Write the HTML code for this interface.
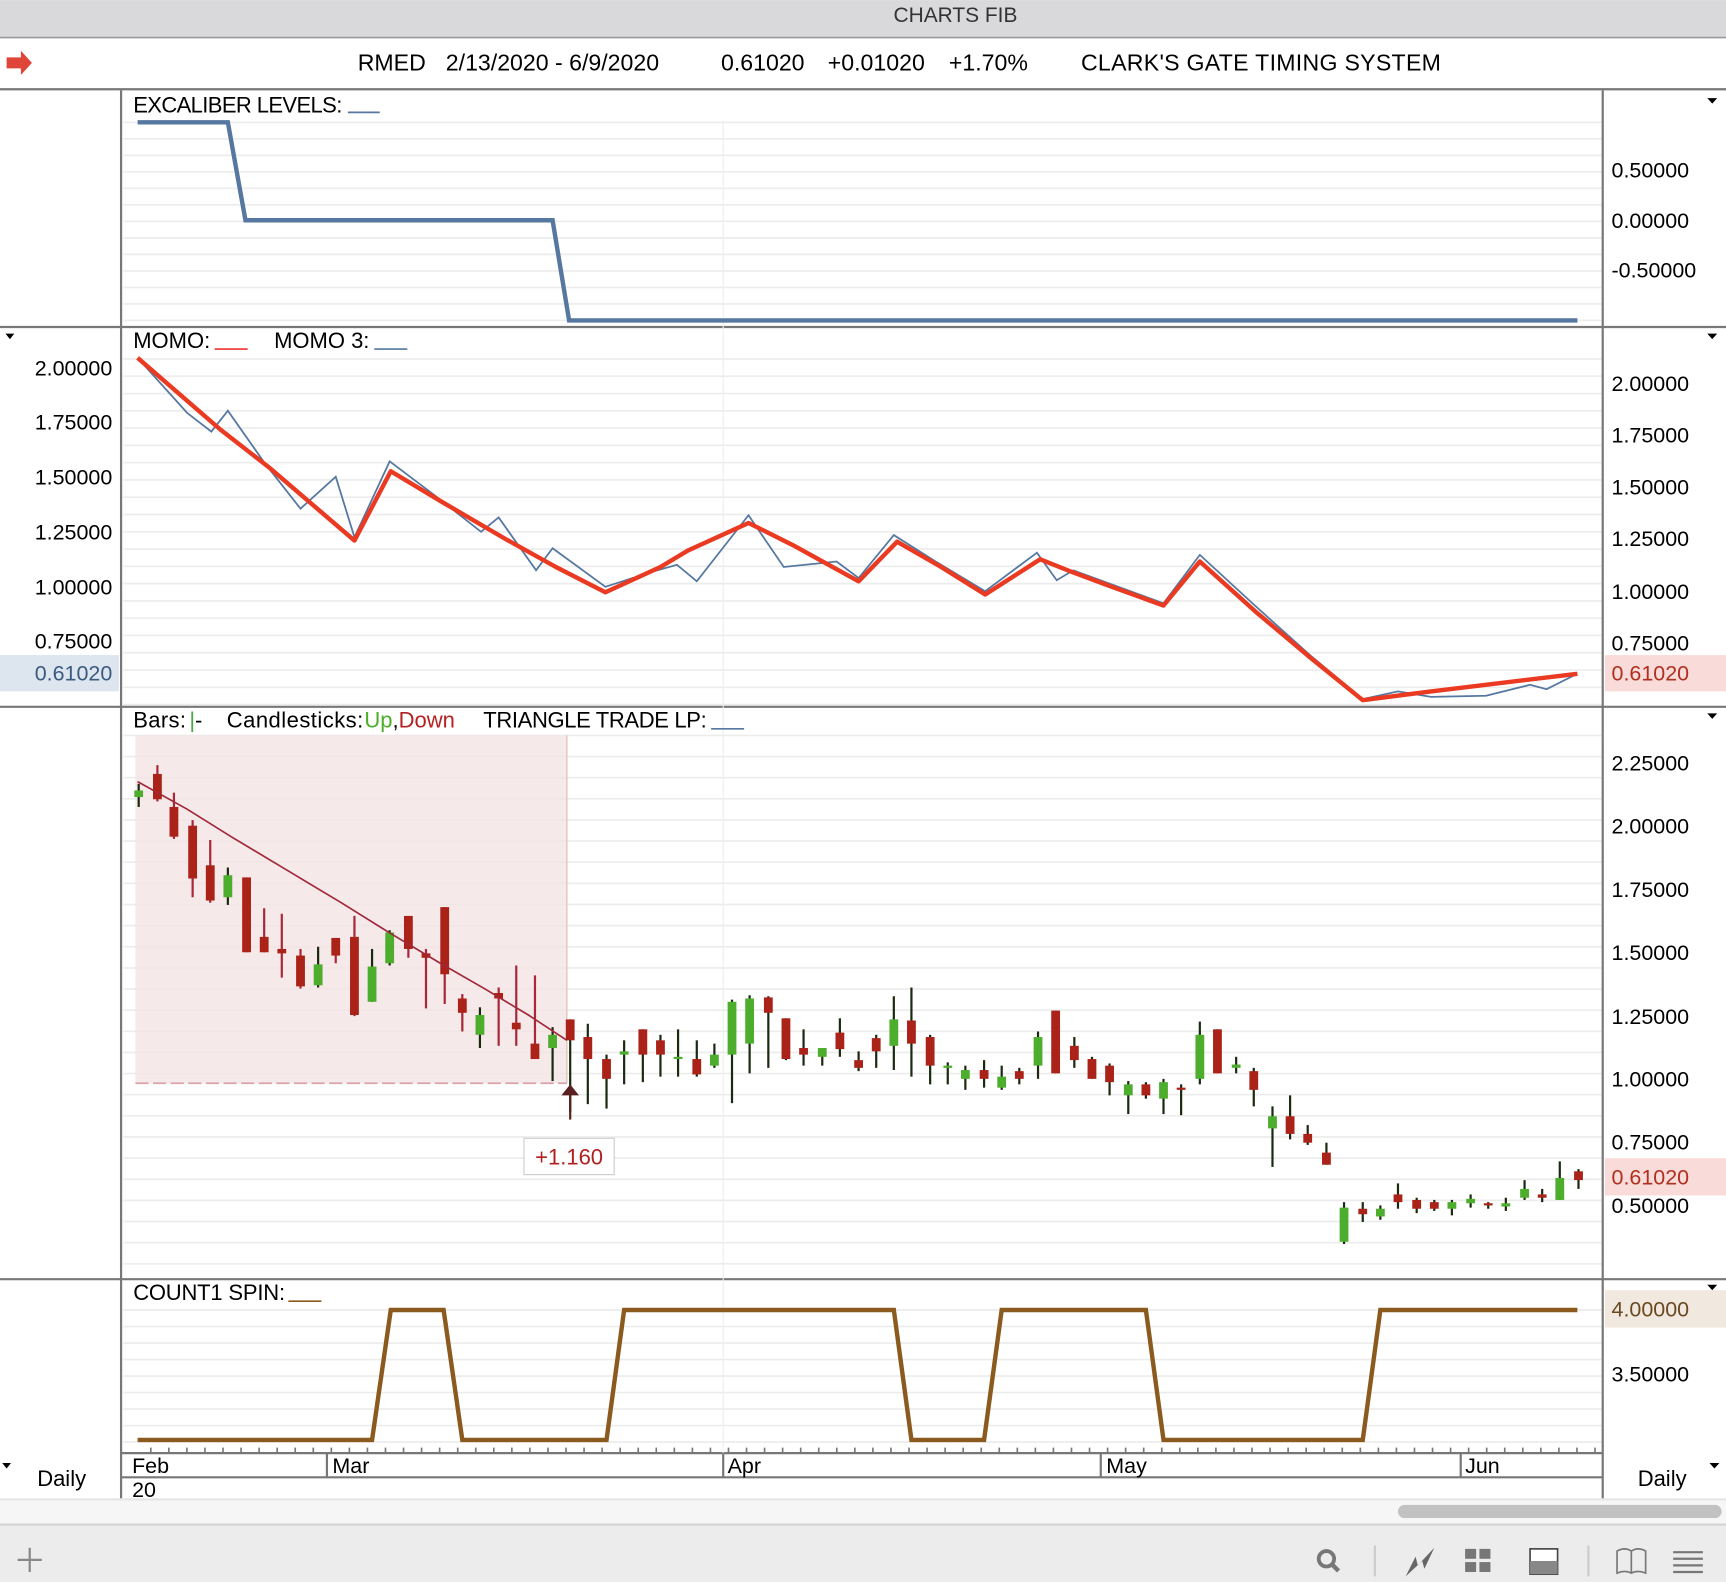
<!DOCTYPE html>
<html><head><meta charset="utf-8"><style>
html,body{margin:0;padding:0;background:#fff;width:1726px;height:1582px;overflow:hidden}
svg{display:block}
text{font-family:"Liberation Sans",sans-serif;}
</style></head><body>
<svg id="s" width="1726" height="1582" viewBox="0 0 1568 1437" xmlns="http://www.w3.org/2000/svg">
<rect x="0" y="0" width="1568" height="1437" fill="#fff"/>
<rect x="0" y="0" width="1568" height="34" fill="#d9d8da"/>
<line x1="0" y1="34" x2="1568" y2="34" stroke="#999" stroke-width="1.5"/>
<text x="868" y="20" font-size="19" text-anchor="middle" fill="#333">CHARTS FIB</text>
<path d="M6 52 h13 v-6 l10 11 l-10 11 v-6 h-13z" fill="#e0453a"/>
<text y="64" font-size="21" fill="#000"><tspan x="325">RMED</tspan><tspan x="405">2/13/2020 - 6/9/2020</tspan><tspan x="655">0.61020</tspan><tspan x="752">+0.01020</tspan><tspan x="862">+1.70%</tspan><tspan x="982" textLength="327">CLARK'S GATE TIMING SYSTEM</tspan></text>
<line x1="0" y1="81" x2="1568" y2="81" stroke="#777" stroke-width="2"/>
<g id="grid"></g>
<g stroke="#777" stroke-width="2">
<line x1="110" y1="82" x2="110" y2="1362"/>
<line x1="1456" y1="82" x2="1456" y2="1362"/>
<line x1="0" y1="297" x2="1568" y2="297"/>
<line x1="0" y1="642" x2="1568" y2="642"/>
<line x1="0" y1="1162" x2="1568" y2="1162"/>
<line x1="110" y1="1320" x2="1456" y2="1320"/>
<line x1="110" y1="1342" x2="1456" y2="1342"/>
<line x1="297" y1="1320" x2="297" y2="1342"/>
<line x1="657" y1="1320" x2="657" y2="1342"/>
<line x1="1000" y1="1320" x2="1000" y2="1342"/>
<line x1="1327" y1="1320" x2="1327" y2="1342"/>
</g>
<line x1="657" y1="110" x2="657" y2="1320" stroke="#eee" stroke-width="1"/>
<text x="121" y="102" font-size="20" textLength="190">EXCALIBER LEVELS:</text>
<line x1="316" y1="102" x2="345" y2="102" stroke="#5577a0" stroke-width="1.5"/>
<polyline points="125,111 207,111 223,200 502,200 517,291 1433,291" fill="none" stroke="#5577a0" stroke-width="4"/>
<g font-size="19.5"><text x="1464" y="161">0.50000</text><text x="1464" y="207">0.00000</text><text x="1464" y="252">-0.50000</text></g>
<text x="121" y="316" font-size="20">MOMO:</text>
<line x1="195" y1="317" x2="225" y2="317" stroke="#e33" stroke-width="1.5"/>
<text x="249" y="316" font-size="20">MOMO 3:</text>
<line x1="340" y1="317" x2="370" y2="317" stroke="#5577a0" stroke-width="1.5"/>
<g font-size="19.5" text-anchor="end"><text x="102" y="341">2.00000</text><text x="102" y="390">1.75000</text><text x="102" y="440">1.50000</text><text x="102" y="490">1.25000</text><text x="102" y="540">1.00000</text><text x="102" y="589">0.75000</text></g>
<g font-size="19.5"><text x="1464" y="355">2.00000</text><text x="1464" y="402">1.75000</text><text x="1464" y="449">1.50000</text><text x="1464" y="496">1.25000</text><text x="1464" y="544">1.00000</text><text x="1464" y="591">0.75000</text></g>
<rect x="0" y="595" width="108" height="33" fill="#dde6ef"/>
<text x="102" y="618" font-size="19.5" text-anchor="end" fill="#3a5a80">0.61020</text>
<rect x="1458" y="595" width="110" height="33" fill="#f9dcda"/>
<text x="1464" y="618" font-size="19.5" fill="#b03020">0.61020</text>
<polyline points="125,325 170,375 192,392 207,373 240,420 273,462 305,433 322,488 354,419 395,450 437,483 453,470 487,518 502,498 550,533 590,520 615,513 633,528 680,468 712,515 760,510 780,525 812,486 850,510 895,537 942,502 960,527 975,518 1057,548 1090,504 1140,550 1190,595 1238,635 1270,628 1300,633 1350,632 1390,622 1405,626 1433,612" fill="none" stroke="#5577a0" stroke-width="1.6"/>
<polyline points="125,325 200,390 245,425 322,491 355,428 400,455 460,490 505,515 550,538 600,515 625,500 680,475 720,495 780,528 815,492 855,515 895,540 945,508 975,520 1010,533 1057,550 1090,510 1140,555 1190,597 1238,636 1300,628 1433,612" fill="none" stroke="#ea3a22" stroke-width="4" stroke-linejoin="round"/>
<rect x="123" y="668" width="392" height="316" fill="#f4e3e4" opacity="0.8"/>
<line x1="515" y1="668" x2="515" y2="984" stroke="#dba" stroke-width="1"/>
<line x1="123" y1="984" x2="515" y2="984" stroke="#d9a3a8" stroke-width="1.5" stroke-dasharray="12,4"/>
<g font-size="20"><text x="121" y="661" textLength="48">Bars:</text><text x="172" y="661"><tspan fill="#4a4">|</tspan>-</text>
<text x="206" y="661" textLength="124">Candlesticks:</text><text x="331" y="661"><tspan fill="#4caf2a">Up</tspan>,<tspan fill="#b52020">Down</tspan></text>
<text x="439" y="661" textLength="203">TRIANGLE TRADE LP:</text></g>
<line x1="646" y1="662" x2="676" y2="662" stroke="#5577a0" stroke-width="1.5"/>
<g font-size="19.5"><text x="1464" y="700">2.25000</text><text x="1464" y="757">2.00000</text><text x="1464" y="815">1.75000</text><text x="1464" y="872">1.50000</text><text x="1464" y="930">1.25000</text><text x="1464" y="987">1.00000</text><text x="1464" y="1044">0.75000</text><text x="1464" y="1102">0.50000</text></g>
<rect x="1458" y="1052" width="110" height="34" fill="#f9dcda"/>
<text x="1464" y="1076" font-size="19.5" fill="#b03020">0.61020</text>
<g id="candles"></g>
<polyline points="125,710 170,735 210,760 260,790 310,820 355,848 400,875 440,898 480,922 515,945" fill="none" stroke="#a0283a" stroke-width="1.5"/>
<line x1="518" y1="990" x2="518" y2="1017" stroke="#5a2020" stroke-width="2"/>
<path d="M510 995 L518 985 L526 995z" fill="#5a2020"/>
<rect x="476" y="1034" width="82" height="33" fill="#fff" stroke="#ccc"/>
<text x="517" y="1058" font-size="20" text-anchor="middle" fill="#b02020">+1.160</text>
<text x="121" y="1181" font-size="20" textLength="138">COUNT1 SPIN:</text>
<line x1="262" y1="1182" x2="292" y2="1182" stroke="#8b5a1e" stroke-width="1.5"/>
<polyline points="125,1308 338,1308 355,1190 403,1190 420,1308 551,1308 567,1190 812,1190 828,1308 894,1308 910,1190 1041,1190 1057,1308 1238,1308 1254,1190 1433,1190" fill="none" stroke="#8b5a1e" stroke-width="4"/>
<rect x="1458" y="1172" width="110" height="34" fill="#f1e8df"/>
<text x="1464" y="1196" font-size="19.5" fill="#6a4a20">4.00000</text>
<text x="1464" y="1255" font-size="19.5">3.50000</text>
<g fill="#000"><path d="M1551 89h9l-4.5 5z"/><path d="M1551 303h9l-4.5 5z"/><path d="M5 303h8l-4 5z"/><path d="M1551 648h9l-4.5 5z"/><path d="M1551 1167h9l-4.5 5z"/><path d="M2 1329h8l-4 5z"/><path d="M1553 1329h9l-4.5 5z"/></g>
<g font-size="19.5"><text x="120" y="1338">Feb</text><text x="120" y="1360">20</text><text x="302" y="1338">Mar</text><text x="661" y="1338">Apr</text><text x="1005" y="1338">May</text><text x="1331" y="1338">Jun</text></g>
<text x="56" y="1350" font-size="20" text-anchor="middle">Daily</text>
<text x="1510" y="1350" font-size="20" text-anchor="middle">Daily</text>
<g id="ticks" stroke="#777" stroke-width="1.5"></g>
<rect x="0" y="1362" width="1568" height="23" fill="#f6f6f6"/>
<line x1="0" y1="1362" x2="1568" y2="1362" stroke="#e6e6e6" stroke-width="2"/>
<rect x="1270" y="1367" width="294" height="12" rx="6" fill="#c2c2c2"/>
<rect x="0" y="1385" width="1568" height="52" fill="#ececec"/>
<line x1="0" y1="1385" x2="1568" y2="1385" stroke="#d4d4d4" stroke-width="2"/>
<g stroke="#888" stroke-width="2"><line x1="27" y1="1406" x2="27" y2="1428"/><line x1="16" y1="1417" x2="38" y2="1417"/></g>
<circle cx="1205" cy="1416" r="7" fill="none" stroke="#777" stroke-width="3.5"/>
<line x1="1210" y1="1421" x2="1216" y2="1427" stroke="#777" stroke-width="4"/>
<line x1="1249" y1="1404" x2="1249" y2="1432" stroke="#ccc" stroke-width="2"/>
<path d="M1277 1432 L1286 1414 L1288 1422 L1303 1406 L1294 1425 L1292 1418z" fill="#666"/>
<g fill="#777"><rect x="1331" y="1407" width="10" height="9"/><rect x="1344" y="1407" width="10" height="9"/><rect x="1331" y="1419" width="10" height="9"/><rect x="1344" y="1419" width="10" height="9"/></g>
<rect x="1390" y="1407" width="25" height="23" fill="#fff" stroke="#444" stroke-width="1.5"/>
<rect x="1390" y="1418" width="25" height="12" fill="#888"/>
<line x1="1443" y1="1404" x2="1443" y2="1432" stroke="#ccc" stroke-width="2"/>
<path d="M1469 1429 V1409 q7 -4 13 0 q6 -4 13 0 V1429 q-7 -3 -13 0 q-6 -3 -13 0z M1482 1409 V1429" fill="none" stroke="#777" stroke-width="1.5"/>
<g stroke="#777" stroke-width="2"><line x1="1520" y1="1410" x2="1547" y2="1410"/><line x1="1520" y1="1416" x2="1547" y2="1416"/><line x1="1520" y1="1422" x2="1547" y2="1422"/><line x1="1520" y1="1428" x2="1547" y2="1428"/></g>
</svg>
<script>
var NS="http://www.w3.org/2000/svg";
function el(p,t,a){var e=document.createElementNS(NS,t);for(var k in a)e.setAttribute(k,a[k]);p.appendChild(e);return e;}
var g=document.getElementById("grid");
function grid(y0,y1,st){for(var y=y0;y<y1;y+=st)el(g,"line",{x1:112,x2:1455,y1:y,y2:y,stroke:"#ececec","stroke-width":1.5});}
grid(111,296,15);grid(326,641,15.7);grid(668,1160,19.2);grid(1190,1318,15);
var c=document.getElementById("candles");
var d=[[126,712,733,718,724,'g'],[143,695,728,703,726,'r'],[158,720,762,733,760,'r'],[175,745,815,750,798,'r'],[191,763,820,786,818,'r'],[207,788,822,795,815,'g'],[224,797,865,797,865,'r'],[240,825,865,851,865,'r'],[256,830,888,862,866,'r'],[273,862,898,868,896,'r'],[289,860,897,876,895,'g'],[305,852,875,852,868,'r'],[322,832,923,851,922,'r'],[338,862,910,878,910,'g'],[354,845,877,847,875,'g'],[371,832,870,832,862,'r'],[387,862,916,866,870,'r'],[404,824,912,824,885,'r'],[420,903,937,907,920,'r'],[436,915,952,922,940,'g'],[453,897,950,902,907,'r'],[469,877,950,929,935,'r'],[486,886,962,948,962,'r'],[502,933,982,940,952,'g'],[518,926,1010,926,945,'r'],[534,930,1003,942,962,'r'],[551,958,1007,962,980,'r'],[567,945,985,955,958,'g'],[584,935,983,935,958,'r'],[600,940,978,945,958,'r'],[616,935,978,960,958,'g'],[633,945,978,962,976,'r'],[649,948,970,958,968,'g'],[665,908,1002,910,958,'g'],[681,904,975,907,948,'g'],[698,905,970,906,920,'r'],[714,925,963,925,962,'r'],[730,935,968,952,958,'r'],[747,952,968,952,960,'g'],[763,925,960,938,953,'r'],[780,955,973,963,970,'r'],[796,940,970,943,955,'r'],[812,905,972,926,950,'g'],[828,897,978,927,948,'r'],[845,940,985,942,968,'r'],[861,965,985,968,970,'g'],[877,968,990,972,980,'g'],[894,963,988,972,980,'r'],[910,968,990,978,988,'g'],[926,970,985,973,980,'r'],[943,937,980,942,968,'g'],[959,918,975,918,975,'r'],[976,942,970,950,963,'r'],[992,960,980,962,980,'r'],[1008,966,995,968,983,'r'],[1025,982,1012,985,995,'g'],[1041,983,998,985,995,'r'],[1057,980,1012,983,998,'g'],[1073,985,1013,988,988,'r'],[1090,928,985,940,980,'g'],[1106,935,975,935,975,'r'],[1123,960,975,967,970,'g'],[1139,970,1005,973,990,'r'],[1156,1005,1060,1014,1025,'g'],[1172,995,1035,1014,1030,'r'],[1188,1022,1040,1030,1038,'r'],[1205,1038,1058,1047,1058,'r'],[1221,1092,1130,1097,1128,'g'],[1238,1092,1110,1098,1103,'r'],[1254,1095,1108,1098,1105,'g'],[1270,1075,1098,1085,1092,'r'],[1287,1088,1102,1090,1098,'r'],[1303,1090,1100,1092,1098,'r'],[1319,1090,1104,1092,1098,'g'],[1336,1085,1097,1089,1093,'g'],[1352,1092,1098,1093,1095,'r'],[1368,1088,1100,1093,1096,'g'],[1385,1072,1090,1080,1088,'g'],[1401,1080,1092,1085,1088,'r'],[1417,1055,1090,1070,1090,'g'],[1434,1062,1080,1064,1072,'r']];
d.forEach(function(a){var r=a[5]=='r';var inside=a[0]<515;
el(c,"line",{x1:a[0],x2:a[0],y1:a[1],y2:a[2],stroke:(r&&inside)?"#a8283a":"#1a2a10","stroke-width":2});
var h=Math.max(a[4]-a[3],2);el(c,"rect",{x:a[0]-4,y:a[3],width:8,height:h,fill:r?"#aa2218":"#4cae2c"});});
var t=document.getElementById("ticks");
for(var x=137;x<1450;x+=16.4){el(t,"line",{x1:x,x2:x,y1:1315,y2:1320});}
</script>
</body></html>
